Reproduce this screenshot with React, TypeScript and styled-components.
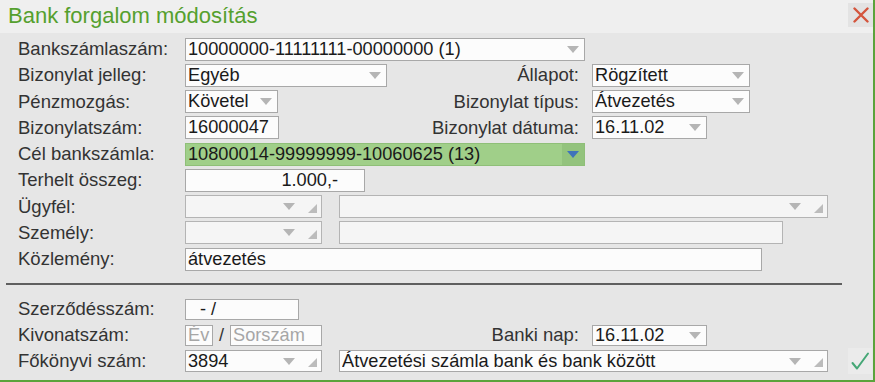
import styled, { createGlobalStyle, css } from "styled-components";

const GlobalStyle = createGlobalStyle`
    html, body {
        margin: 0;
        padding: 0;
        background: #e6e6e6;
    }
    * {
        box-sizing: border-box;
    }
`

const Window = styled.div`
    width: 875px;
    height: 382px;
    display: flex;
    flex-direction: column;
    background: #e6e6e6;
    border-right: 2px solid #5ba33b;
    border-bottom: 2px solid #5ba33b;
    font-family: "Liberation Sans", Arial, sans-serif;
    overflow: hidden;
`
const TitleBar = styled.div`
    height: 33px;
    display: flex;
    align-items: flex-start;
    justify-content: space-between;
    background: #efefef;
    padding-left: 8px;
`
const Title = styled.h1`
    margin: 0;
    font-weight: 400;
    font-size: 22px;
    line-height: 32px;
    color: #55a02e;
`
const CloseButton = styled.button`
    width: 25px;
    height: 24px;
    margin: 3px 0 0 0;
    padding: 0;
    border: none;
    background: #e3e3e3;
    display: flex;
    align-items: center;
    justify-content: center;
`
const Form = styled.div`
    display: flex;
    flex-direction: column;
    padding: 3px 0 0 18px;
`
const Row = styled.div<{ $h?: number }>`
    display: flex;
    align-items: center;
    height: ${p => p.$h ?? 26.25}px;
`
const Label = styled.span`
    flex: 0 0 167px;
    font-size: 18.5px;
    color: #333333;
    white-space: nowrap;
`
const LeftCell = styled.div`
    flex: 0 0 407px;
    display: flex;
    align-items: center;
    justify-content: space-between;
`
const SideLabel = styled.span`
    font-size: 18.5px;
    color: #333333;
    padding-right: 13px;
    white-space: nowrap;
`
const Group = styled.div<{ $gap?: number }>`
    display: flex;
    align-items: center;
    gap: ${p => p.$gap ?? 17}px;
`
const boxBase = css<{ $w: number; $h?: number; $disabled?: boolean }>`
    width: ${p => p.$w}px;
    height: ${p => p.$h ?? 23}px;
    border: 1px solid ${p => (p.$disabled ? "#b4b4b4" : "#a8a8a8")};
    background: ${p => (p.$disabled ? "#f5f5f5" : "#fcfcfc")};
    display: flex;
    align-items: center;
    font-size: 18.2px;
    color: #1a1a1a;
    white-space: pre;
    overflow: hidden;
`
const TextBox = styled.div<{ $w: number; $h?: number; $disabled?: boolean; $right?: boolean; $indent?: number; $muted?: boolean }>`
    ${boxBase};
    padding: 0 ${p => (p.$right ? 26 : 2)}px 0 ${p => p.$indent ?? 2}px;
    justify-content: ${p => (p.$right ? "flex-end" : "flex-start")};
    color: ${p => (p.$muted ? "#a6a6a6" : "#1a1a1a")};
`
const ComboBox = styled.div<{ $w: number; $h?: number; $disabled?: boolean; $green?: boolean }>`
    ${boxBase};
    padding-left: 2px;
    ${p => p.$green && css`
        background: #a0cf89;
        border-color: #8fbf78;
    `}
`
const Value = styled.span`
    flex: 1;
    overflow: hidden;
`
const Arrow = styled.span<{ $color?: string; $mr?: number }>`
    width: 0;
    height: 0;
    border-left: 6px solid transparent;
    border-right: 6px solid transparent;
    border-top: 7px solid ${p => p.$color ?? "#b5b5b5"};
    margin-right: ${p => p.$mr ?? 5}px;
`
const Grip = styled.span`
    align-self: flex-end;
    width: 0;
    height: 0;
    border-left: 9px solid transparent;
    border-bottom: 9px solid #bcbcbc;
    margin: 0 4px 4px 0;
`
const ArrowZone = styled.span`
    align-self: stretch;
    width: 22px;
    background: #93c37d;
    display: flex;
    align-items: center;
    justify-content: center;
`
const Slash = styled.span`
    font-size: 18.2px;
    color: #333333;
    margin: 0 6px;
`
const Divider = styled.hr`
    margin: 11px 0 11px -12px;
    width: 836px;
    height: 2px;
    border: none;
    background: #5f5f5f;
`
const ConfirmButton = styled.button`
    width: 24px;
    height: 26px;
    margin-left: 20px;
    padding: 0;
    border: none;
    background: #ebebeb;
    display: flex;
    align-items: center;
    justify-content: center;
`

type ComboProps = { w: number; value?: string; h?: number; disabled?: boolean; grip?: boolean };

const Combo = ({ w, value = "", h, disabled, grip }: ComboProps) => (
    <ComboBox $w={w} $h={h} $disabled={disabled}>
        <Value>{value}</Value>
        <Arrow $mr={grip ? 13 : 5} />
        {grip && <Grip />}
    </ComboBox>
)

export default function App() {
    return (
        <>
            <GlobalStyle />
            <Window>
                <TitleBar>
                    <Title>Bank forgalom módosítás</Title>
                    <CloseButton aria-label="Bezárás">
                        <svg width="16" height="16" viewBox="0 0 16 16">
                            <path d="M1.5 1.5 L14.5 14.5 M14.5 1.5 L1.5 14.5" stroke="#d4553d" strokeWidth="2.4" strokeLinecap="round" />
                        </svg>
                    </CloseButton>
                </TitleBar>
                <Form>
                    <Row>
                        <Label>Bankszámlaszám:</Label>
                        <Combo w={400} value="10000000-11111111-00000000 (1)" />
                    </Row>
                    <Row>
                        <Label>Bizonylat jelleg:</Label>
                        <LeftCell>
                            <Combo w={202} value="Egyéb" />
                            <SideLabel>Állapot:</SideLabel>
                        </LeftCell>
                        <Combo w={158} value="Rögzített" />
                    </Row>
                    <Row>
                        <Label>Pénzmozgás:</Label>
                        <LeftCell>
                            <Combo w={93} value="Követel" />
                            <SideLabel>Bizonylat típus:</SideLabel>
                        </LeftCell>
                        <Combo w={158} value="Átvezetés" />
                    </Row>
                    <Row>
                        <Label>Bizonylatszám:</Label>
                        <LeftCell>
                            <TextBox $w={94}>16000047</TextBox>
                            <SideLabel>Bizonylat dátuma:</SideLabel>
                        </LeftCell>
                        <Combo w={115} value="16.11.02" />
                    </Row>
                    <Row>
                        <Label>Cél bankszámla:</Label>
                        <ComboBox $w={400} $green>
                            <Value>10800014-99999999-10060625 (13)</Value>
                            <ArrowZone>
                                <Arrow $color="#3f73ba" $mr={0} />
                            </ArrowZone>
                        </ComboBox>
                    </Row>
                    <Row>
                        <Label>Terhelt összeg:</Label>
                        <TextBox $w={180} $right>1.000,-</TextBox>
                    </Row>
                    <Row>
                        <Label>Ügyfél:</Label>
                        <Group>
                            <Combo w={137} disabled grip />
                            <Combo w={489} disabled grip />
                        </Group>
                    </Row>
                    <Row>
                        <Label>Személy:</Label>
                        <Group>
                            <Combo w={137} disabled grip />
                            <TextBox $w={444} $disabled />
                        </Group>
                    </Row>
                    <Row>
                        <Label>Közlemény:</Label>
                        <TextBox $w={577}>átvezetés</TextBox>
                    </Row>
                    <Divider />
                    <Row $h={26}>
                        <Label>Szerződésszám:</Label>
                        <TextBox $w={114} $h={21} $indent={14}>- /</TextBox>
                    </Row>
                    <Row $h={26}>
                        <Label>Kivonatszám:</Label>
                        <LeftCell>
                            <Group $gap={0}>
                                <TextBox $w={28} $h={21} $muted>Év</TextBox>
                                <Slash>/</Slash>
                                <TextBox $w={92} $h={21} $muted>Sorszám</TextBox>
                            </Group>
                            <SideLabel>Banki nap:</SideLabel>
                        </LeftCell>
                        <Combo w={115} h={21} value="16.11.02" />
                    </Row>
                    <Row $h={26}>
                        <Label>Főkönyvi szám:</Label>
                        <Group>
                            <Combo w={137} h={22} value="3894" grip />
                            <Combo w={489} h={22} value="Átvezetési számla bank és bank között" grip />
                        </Group>
                        <ConfirmButton aria-label="Mentés">
                            <svg width="20" height="20" viewBox="0 0 20 20">
                                <path d="M2.5 12 L7 17.5 L18 2.5" fill="none" stroke="#45a776" strokeWidth="2" strokeLinecap="round" strokeLinejoin="round" />
                            </svg>
                        </ConfirmButton>
                    </Row>
                </Form>
            </Window>
        </>
    );
}
